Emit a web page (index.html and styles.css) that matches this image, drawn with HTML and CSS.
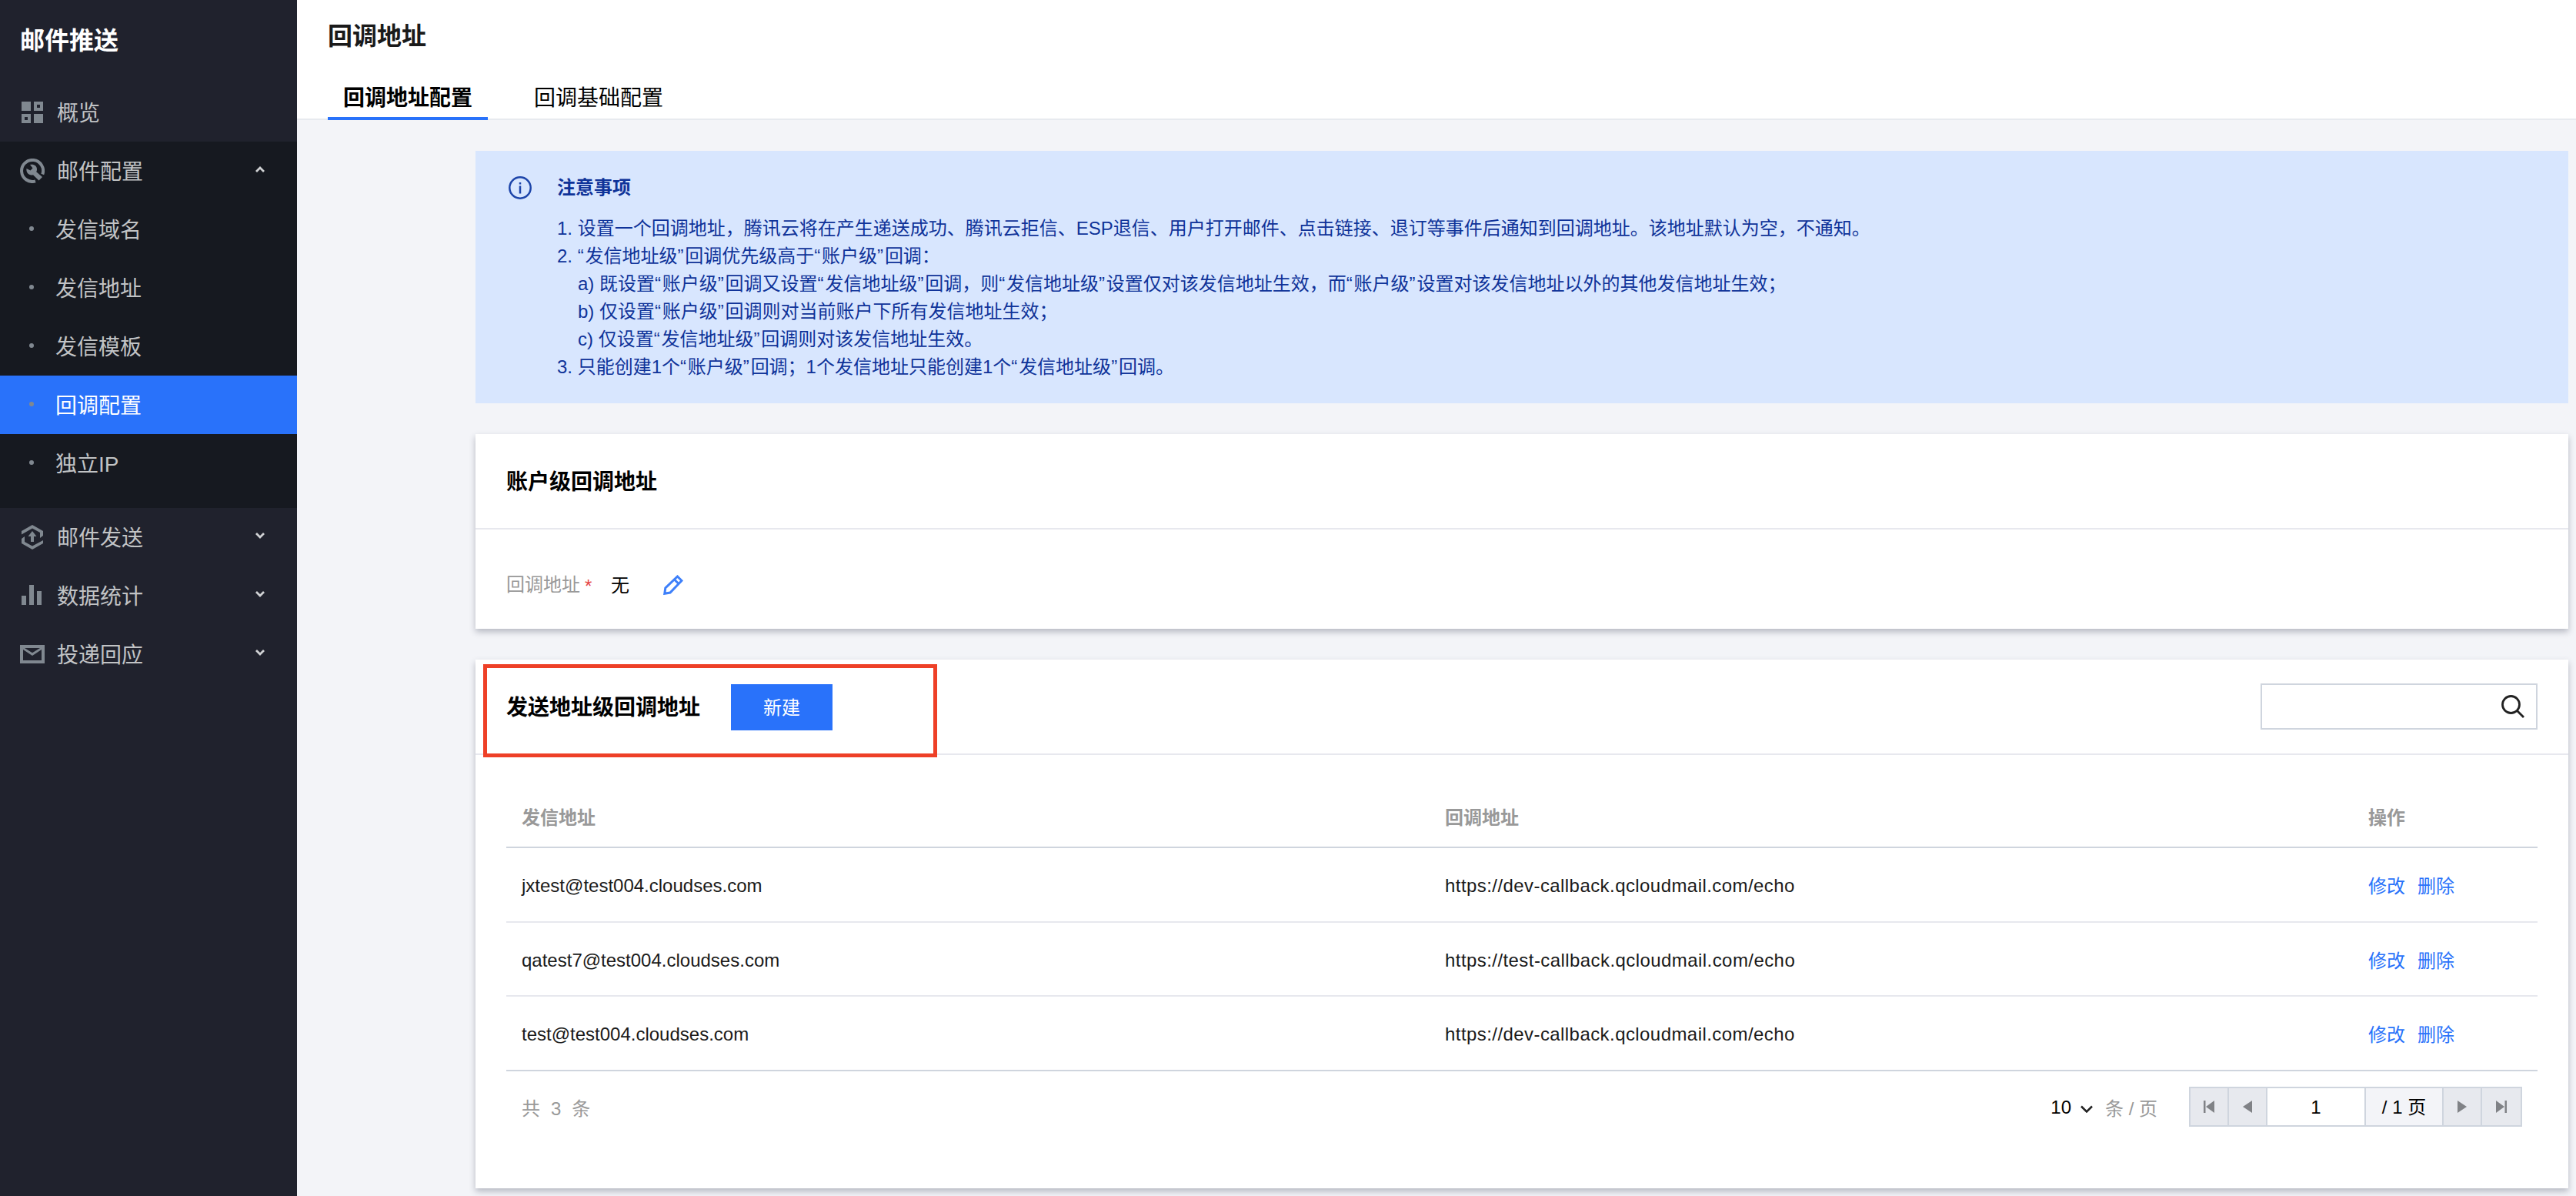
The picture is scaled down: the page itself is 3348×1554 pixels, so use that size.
FILE: index.html
```html
<!DOCTYPE html>
<html lang="zh-CN">
<head>
    <meta charset="UTF-8">
    <meta name="viewport" content="width=device-width, initial-scale=1.0">
    <title>回调地址 - 邮件推送</title>
    <link rel="stylesheet" href="styles.css">
</head>
<body>
    <aside class="sidebar">
        <h2 class="sidebar-title">邮件推送</h2>
        <ul class="menu">
            <li class="menu-item">
                <svg class="menu-icon" viewBox="0 0 32 32"><path fill-rule="evenodd" d="M2 2h12v12H2zM18 2h12v12H18zM22 6v4h4V6zM2 18h12v12H2zM6 22v4h4v-4zM18 18h12v12H18z"/></svg>
                <span>概览</span>
            </li>
            <li class="menu-group">
                <div class="menu-item">
                    <svg class="menu-icon" viewBox="0 0 32 32"><path d="M20 29.400A14 14 0 1 1 29.300 20.500" fill="none" stroke="currentColor" stroke-width="4"/><path d="M8.500 13l5 2.500 3-3-3.500-4.500c4.500-1.200 9 1 9 6 0 1.500-.3 2.300-.8 3.200L29 24l-4.500 4.500-7.500-7.300c-5 1.500-9.500-2.700-8.500-8.200z"/></svg>
                    <span>邮件配置</span>
                    <svg class="arrow arrow-up" viewBox="0 0 12 8"><path d="M1 7l5-5 5 5"/></svg>
                </div>
                <ul class="submenu">
                    <li><span>发信域名</span></li>
                    <li><span>发信地址</span></li>
                    <li><span>发信模板</span></li>
                    <li class="active"><span>回调配置</span></li>
                    <li><span>独立IP</span></li>
                </ul>
            </li>
            <li class="menu-item">
                <svg class="menu-icon" viewBox="0 0 32 32"><path d="M2 8l14-8 14 8v6l-4 3v-7L16 4.500 2 12.500zM2 18l4-3v7l10 5.500L30 20v4l-14 8-14-8zM16 8l5.500 7H18v7h-4v-7h-3.500z"/></svg>
                <span>邮件发送</span>
                <svg class="arrow" viewBox="0 0 12 8"><path d="M1 1l5 5 5-5"/></svg>
            </li>
            <li class="menu-item">
                <svg class="menu-icon" viewBox="0 0 32 32"><path d="M2 16h6v12H2zM12 2h6v26h-6zM22 10h6v18h-6z"/></svg>
                <span>数据统计</span>
                <svg class="arrow" viewBox="0 0 12 8"><path d="M1 1l5 5 5-5"/></svg>
            </li>
            <li class="menu-item">
                <svg class="menu-icon" viewBox="0 0 32 32"><path fill-rule="evenodd" d="M0 4h32v24H0zM4 10v14h24V10l-12 8zM6 8l10 6.300L26 8z"/></svg>
                <span>投递回应</span>
                <svg class="arrow" viewBox="0 0 12 8"><path d="M1 1l5 5 5-5"/></svg>
            </li>
        </ul>
    </aside>

    <main class="main">
        <header class="page-header">
            <h1>回调地址</h1>
            <nav class="tabs">
                <a class="tab tab-active">回调地址配置</a>
                <a class="tab">回调基础配置</a>
            </nav>
        </header>

        <div class="content">
            <section class="notice">
                <svg class="notice-icon" viewBox="0 0 30 30"><circle cx="15" cy="15" r="13.700"/><path d="M15 12.500v10M15 8v2.500"/></svg>
                <div class="notice-text">
                    <h4>注意事项</h4>
                    <p>1. 设置一个回调地址，腾讯云将在产生递送成功、腾讯云拒信、ESP退信、用户打开邮件、点击链接、退订等事件后通知到回调地址。该地址默认为空，不通知。</p>
                    <p>2. <i>“</i>发信地址级<i>”</i>回调优先级高于<i>“</i>账户级<i>”</i>回调：</p>
                    <p class="indent">a) 既设置<i>“</i>账户级<i>”</i>回调又设置<i>“</i>发信地址级<i>”</i>回调，则<i>“</i>发信地址级<i>”</i>设置仅对该发信地址生效，而<i>“</i>账户级<i>”</i>设置对该发信地址以外的其他发信地址生效；</p>
                    <p class="indent">b) 仅设置<i>“</i>账户级<i>”</i>回调则对当前账户下所有发信地址生效；</p>
                    <p class="indent">c) 仅设置<i>“</i>发信地址级<i>”</i>回调则对该发信地址生效。</p>
                    <p>3. 只能创建1个<i>“</i>账户级<i>”</i>回调；1个发信地址只能创建1个<i>“</i>发信地址级<i>”</i>回调。</p>
                </div>
            </section>

            <section class="card account-card">
                <div class="card-header">
                    <h3>账户级回调地址</h3>
                </div>
                <div class="form-row">
                    <label>回调地址</label>
                    <span class="required">*</span>
                    <span class="value">无</span>
                    <svg class="edit-icon" viewBox="0 0 26 26"><path d="M1.800 24.300l1-7.300L18.500 2l5.500 5.500L9 23zM14.500 6l5.500 5.500"/></svg>
                </div>
            </section>

            <section class="card address-card">
                <div class="card-header">
                    <h3>发送地址级回调地址</h3>
                    <button class="btn">新建</button>
                    <div class="search">
                        <svg viewBox="0 0 30 30"><circle cx="12.500" cy="12.500" r="11"/><path d="M20.500 20.500l8.500 8.500"/></svg>
                    </div>
                    <div class="highlight"></div>
                </div>
                <table class="table">
                    <thead>
                        <tr><th>发信地址</th><th>回调地址</th><th class="col-action">操作</th></tr>
                    </thead>
                    <tbody>
                        <tr><td>jxtest@test004.cloudses.com</td><td class="url">https://dev-callback.qcloudmail.com/echo</td><td class="actions"><a>修改</a><a>删除</a></td></tr>
                        <tr><td>qatest7@test004.cloudses.com</td><td class="url">https://test-callback.qcloudmail.com/echo</td><td class="actions"><a>修改</a><a>删除</a></td></tr>
                        <tr><td>test@test004.cloudses.com</td><td class="url">https://dev-callback.qcloudmail.com/echo</td><td class="actions"><a>修改</a><a>删除</a></td></tr>
                    </tbody>
                </table>
                <div class="pagination">
                    <div class="total"><span>共</span><span>3</span><span>条</span></div>
                    <div class="page-size">
                        <span class="size">10</span>
                        <svg viewBox="0 0 16 10"><path d="M1 1.500l7 7 7-7"/></svg>
                        <span>条 / 页</span>
                    </div>
                    <div class="pager">
                        <span class="cell"><svg viewBox="0 0 16 16"><path d="M1 0h2.500v16H1zM15 0v16L4 8z"/></svg></span>
                        <span class="cell"><svg viewBox="0 0 16 16"><path d="M14 0v16L2 8z"/></svg></span>
                        <span class="cell current">1</span>
                        <span class="cell count">/ 1 页</span>
                        <span class="cell"><svg viewBox="0 0 16 16"><path d="M2 0v16l12-8z"/></svg></span>
                        <span class="cell last"><svg viewBox="0 0 16 16"><path d="M1 0v16l11-8zM12.500 0H15v16h-2.500z"/></svg></span>
                    </div>
                </div>
            </section>
        </div>
    </main>
</body>
</html>
```
FILE: styles.css
```css
* {
    box-sizing: border-box;
}
body {
    display: flex;
    margin: 0;
    height: 1554px;
    overflow: hidden;
    font-family: "Liberation Sans", "Noto Sans CJK SC", sans-serif;
    font-size: 24px;
    color: #000;
    background: #f3f4f8;
}
h1, h2, h3, h4, p, ul {
    margin: 0;
    padding: 0;
}
ul {
    list-style: none;
}
svg {
    display: block;
    flex: none;
}

/* Sidebar */
.sidebar {
    flex: none;
    width: 386px;
    background: #20222d;
    color: #c1c3c5;
    font-size: 28px;
}
.sidebar-title {
    height: 108px;
    padding-left: 26px;
    font-size: 32px;
    line-height: 106px;
    color: #fff;
}
.menu-item {
    display: flex;
    align-items: center;
    height: 76px;
    padding: 0 42px 0 26px;
}
.menu-item span, .submenu span {
    padding-bottom: 3px;
}
.menu-icon {
    width: 32px;
    height: 32px;
    margin-right: 16px;
    fill: #808890;
    color: #808890;
}
.arrow {
    width: 12px;
    height: 8px;
    margin: -4px 0 0 auto;
    fill: none;
    stroke: #d0d2d4;
    stroke-width: 2.8;
}
.menu-group {
    padding-bottom: 20px;
    background: #161920;
}
.submenu li {
    display: flex;
    align-items: center;
    height: 76px;
    padding-left: 38px;
}
.submenu li::before {
    content: "";
    width: 6px;
    height: 6px;
    margin: -2px 28px 0 0;
    border-radius: 50%;
    background: #808890;
}
.submenu .active {
    color: #fff;
    background: #2972fa;
}

/* Page header */
.main {
    flex: 1;
}
.page-header {
    display: flex;
    flex-direction: column;
    justify-content: space-between;
    height: 156px;
    padding-left: 40px;
    background: #fff;
    border-bottom: 2px solid #e7eaef;
}
h1 {
    font-size: 32px;
    line-height: 94px;
    color: #1a1a1a;
}
.tabs {
    display: flex;
    gap: 40px;
    margin-bottom: -2px;
}
.tab {
    height: 60px;
    padding: 0 20px;
    font-size: 28px;
    line-height: 63px;
}
.tab-active {
    font-weight: bold;
    border-bottom: 4px solid #2972fa;
}

.content {
    padding: 40px 10px 10px 232px;
}
.notice {
    display: flex;
    height: 328px;
    padding: 33px 43px;
    color: #0f3399;
    background: #d8e6fe;
}
.notice-icon {
    width: 30px;
    height: 30px;
    margin-right: 33px;
    fill: none;
    stroke: #1d45aa;
    stroke-width: 2.5;
}
.notice-text {
    line-height: 36px;
    white-space: nowrap;
}
.notice-text h4 {
    margin: -3px 0 17px;
    font-size: 24px;
}
.notice-text i {
    font-style: normal;
    letter-spacing: 1.8px;
}
.indent {
    padding-left: 27px;
}

/* Cards */
.card {
    margin-top: 40px;
    background: #fff;
    box-shadow: 0 4px 8px rgba(54, 58, 80, 0.32);
}
.account-card {
    height: 253px;
}
.address-card {
    height: 687px;
}
.card-header {
    position: relative;
    display: flex;
    align-items: center;
    height: 124px;
    padding: 0 40px;
    border-bottom: 2px solid #e7e8ee;
}
h3 {
    padding-bottom: 2px;
    font-size: 28px;
}
.form-row {
    display: flex;
    align-items: center;
    height: 141px;
    padding-left: 40px;
}
.form-row label {
    padding-bottom: 2px;
    color: #999;
}
.required {
    width: 10px;
    margin: 6px 0 0 6px;
    color: #e54545;
}
.value {
    margin-left: 24px;
}
.edit-icon {
    width: 26px;
    height: 26px;
    margin: 3px 0 0 44px;
    fill: none;
    stroke: #3e80fa;
    stroke-width: 3;
}
.btn {
    width: 132px;
    height: 60px;
    margin: 2px 0 0 40px;
    padding: 0 0 3px;
    border: 0;
    font: inherit;
    color: #fff;
    background: #2972fa;
}
.search {
    display: flex;
    align-items: center;
    justify-content: flex-end;
    width: 360px;
    height: 60px;
    margin-left: auto;
    padding-right: 15px;
    border: 2px solid #cfd5de;
}
.search svg {
    width: 30px;
    height: 30px;
    fill: none;
    stroke: #222;
    stroke-width: 2.8;
}
/* red frame over the title and the create button */
.highlight {
    position: absolute;
    left: 10px;
    top: 6px;
    width: 590px;
    height: 121px;
    border: 5px solid #ee4027;
}

/* Table */
.table {
    width: 2640px;
    margin: 43px 40px 0;
    table-layout: fixed;
    border-collapse: separate;
    border-spacing: 0;
}
.table th {
    height: 78px;
    padding: 0 20px 3px;
    text-align: left;
    color: #999;
    border-bottom: 2px solid #cfd5de;
}
.col-action {
    width: 240px;
}
.table td {
    height: 97px;
    padding: 3px 20px 0;
    color: #1a1a1a;
    border-bottom: 2px solid #e7e8ee;
}
.table .actions {
    padding-top: 0;
}
.table .url {
    letter-spacing: 0.43px;
}
.table tr:nth-child(2) td {
    height: 96px;
}
.table tr:last-child td {
    border-bottom-color: #cfd5de;
}
.table a {
    margin-right: 16px;
    color: #2972fa;
}

/* Pagination */
.pagination {
    display: flex;
    align-items: center;
    height: 52px;
    margin: 20px 60px 0;
    color: #999;
}
.total {
    display: flex;
    align-items: baseline;
    gap: 14px;
}
.page-size {
    display: flex;
    align-items: center;
    margin-left: auto;
}
.page-size .size {
    padding-top: 2px;
    color: #000;
}
.page-size svg {
    width: 16px;
    height: 10px;
    margin: 5px 16px 0 12px;
    fill: none;
    stroke: #222;
    stroke-width: 2.5;
}
.pager {
    display: flex;
    height: 52px;
    margin-left: 41px;
    border: 2px solid #cfd5de;
}
.cell {
    display: flex;
    align-items: center;
    justify-content: center;
    width: 50px;
    background: #e7e9ee;
    border-right: 2px solid #cfd5de;
    color: #000;
}
.cell svg {
    width: 16px;
    height: 16px;
    fill: #808286;
}
.cell.current {
    width: 128px;
    padding-top: 2px;
    background: #fff;
}
.cell.count {
    width: 101px;
    padding-bottom: 3px;
    background: #f3f4f8;
}
.cell.last {
    border-right: 0;
}
```
